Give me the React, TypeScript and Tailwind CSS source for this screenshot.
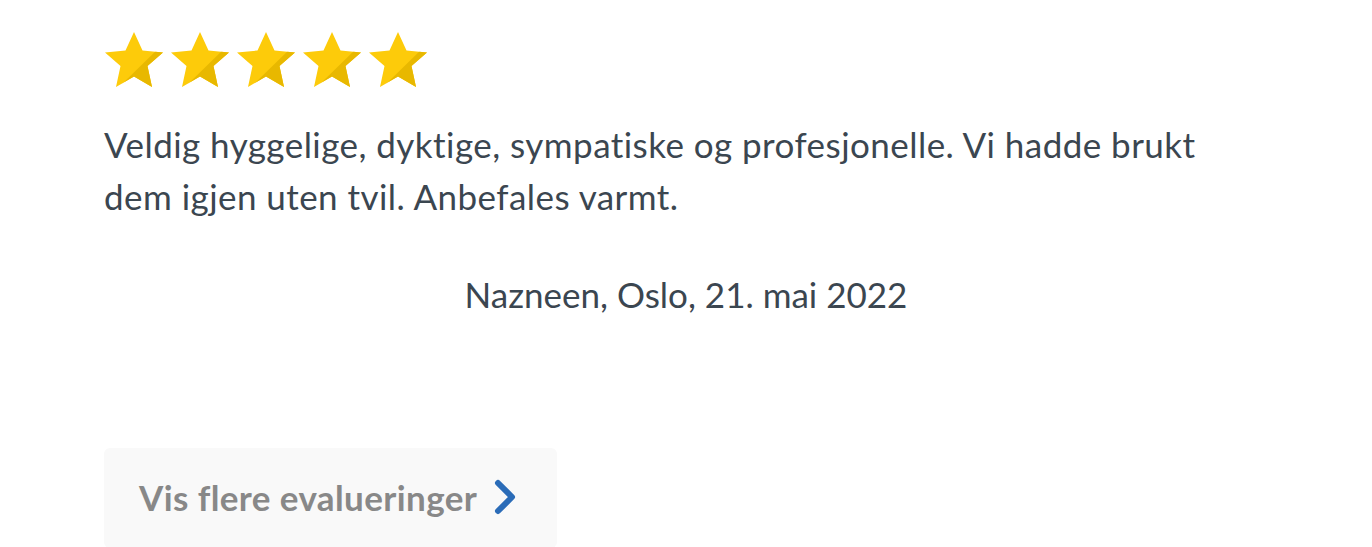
import React from 'react';

const Star = () => (
  <svg viewBox="0 0 60 57" className="h-[57px] w-[60px]">
    <defs>
      <clipPath id="lowerRight">
        <polygon points="14,57 60,12 60,57" />
      </clipPath>
    </defs>
    <polygon
      points="30,1 38.5,19.5 59,21.5 43.5,35 48,56 30,45.5 12,56 16.5,35 1,21.5 21.5,19.5"
      fill="#fdcb0a"
    />
    <polygon
      points="30,1 38.5,19.5 59,21.5 43.5,35 48,56 30,45.5 12,56 16.5,35 1,21.5 21.5,19.5"
      fill="#e8b800"
      clipPath="url(#lowerRight)"
    />
  </svg>
);

const ChevronRight = () => (
  <svg viewBox="0 0 24 36" className="h-[36px] w-[24px]">
    <path d="M5 4 L19 18 L5 32" fill="none" stroke="#2b6cb8" strokeWidth="6" strokeLinecap="round" strokeLinejoin="round" />
  </svg>
);

const App = () => {
  return (
    <div className="min-h-[547px] bg-white font-['Lato','Open_Sans',sans-serif] overflow-hidden">
      <div className="mx-[104px] pt-[31px]">
        <div className="flex gap-[6px]">
          {[0, 1, 2, 3, 4].map((i) => (
            <Star key={i} />
          ))}
        </div>

        <p className="mt-[30px] max-w-[1140px] text-[35px] leading-[52px] tracking-[0.45px] text-[#3b4650]">
          Veldig hyggelige, dyktige, sympatiske og profesjonelle. Vi hadde brukt dem igjen uten tvil. Anbefales varmt.
        </p>

        <p className="mt-[46px] text-center text-[35px] leading-[52px] text-[#3b4650]">
          Nazneen, Oslo, 21. mai 2022
        </p>

        <button className="mt-[128px] flex h-[100px] w-[453px] items-center gap-[16px] rounded-[6px] bg-[#f9f9f9] px-[35px] pb-[2px]">
          <span className="text-[35px] font-bold tracking-[0.4px] text-[#888888]">Vis flere evalueringer</span>
          <ChevronRight />
        </button>
      </div>
    </div>
  );
};

export default App;
